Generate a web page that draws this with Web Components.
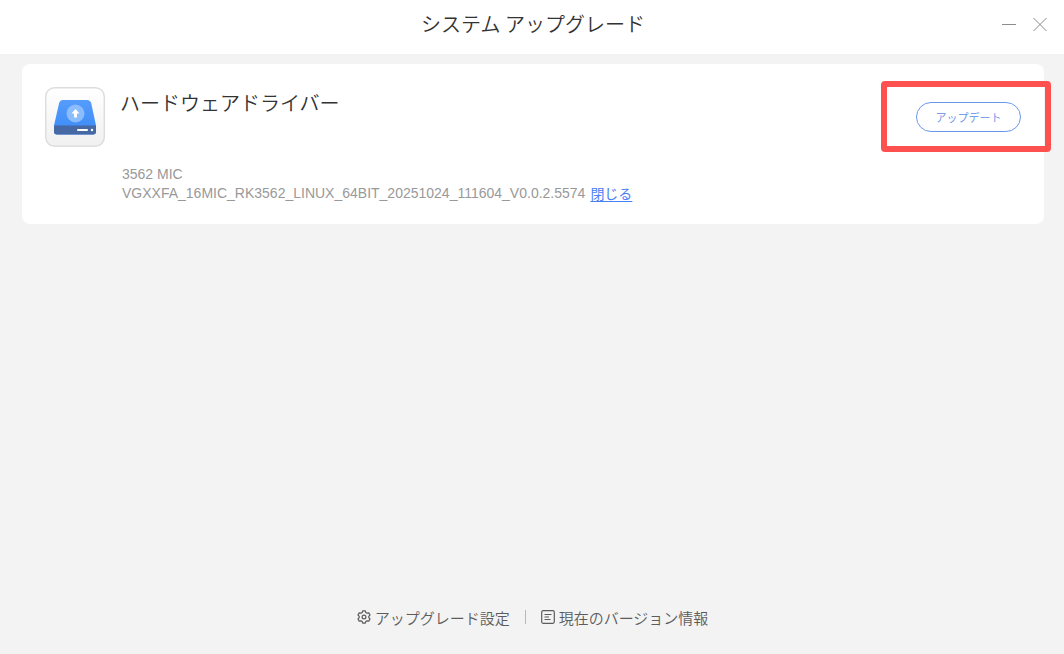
<!DOCTYPE html>
<html lang="ja">
<head>
<meta charset="utf-8">
<title>システム アップグレード</title>
<style>
html, body { height: 100%; margin: 0; }
body { background: #f3f3f3; color: #333; font-family: "Noto Sans CJK JP", sans-serif; font-weight: 350; }
</style>
</head>
<body>
<upgrade-window>
  <title-bar slot="header">システム アップグレード</title-bar>
  <upgrade-card>
    <drive-icon slot="icon"></drive-icon>
    <span slot="name">ハードウェアドライバー</span>
    <update-action slot="action">アップデート</update-action>
    <span slot="model">3562 MIC</span>
    <span slot="version">VGXXFA_16MIC_RK3562_LINUX_64BIT_20251024_111604_V0.0.2.5574</span>
  </upgrade-card>
  <footer-action slot="footer" icon="gear">アップグレード設定</footer-action>
  <footer-action slot="footer" icon="document" divided>現在のバージョン情報</footer-action>
</upgrade-window>
<script>
function define(name, html, setup) {
  const template = document.createElement('template');
  template.innerHTML = html;
  customElements.define(name, class extends HTMLElement {
    constructor() {
      super();
      this.attachShadow({ mode: 'open' }).append(template.content.cloneNode(true));
    }
    connectedCallback() { if (setup) setup(this); }
  });
}

define('upgrade-window', `
<style>
:host { display: flex; flex-direction: column; min-height: 100vh; }
main { flex: 1; padding: 10px 20px 20px 22px; }
footer { display: flex; justify-content: center; align-items: center; padding: 0 0 24px 1px; }
</style>
<slot name="header"></slot>
<main><slot></slot></main>
<footer><slot name="footer"></slot></footer>`);

define('title-bar', `
<style>
:host { display: grid; grid-template-columns: 1fr auto 1fr; align-items: center; height: 54px; box-sizing: border-box; padding: 0 16px 6px 18px; background: #fff; }
h1 { grid-column: 2; margin: 0; font-size: 20px; line-height: 28px; font-weight: inherit; }
.controls { display: flex; justify-content: flex-end; gap: 15px; }
button { border: 0; padding: 0; background: none; display: flex; }
svg { display: block; fill: none; stroke: #8c8c8c; stroke-width: 1; }
</style>
<h1><slot></slot></h1>
<div class="controls">
<button type="button" aria-label="最小化"><svg width="16" height="16"><path d="M1 8.500h14"/></svg></button>
<button type="button" aria-label="閉じる"><svg width="16" height="16"><path d="M1.500 2l13 13M14.500 2l-13 13"/></svg></button>
</div>`);

define('upgrade-card', `
<style>
:host { display: grid; grid-template-columns: 60px 1fr auto; column-gap: 15px; padding: 23px 23px 21px; border-radius: 8px; background: #fff; }
h2 { margin: 2px 0 0; font-size: 20px; line-height: 28px; font-weight: inherit; }
.details { grid-column: 2 / -1; margin: 18px 0 0; padding-left: 2px; color: #999; font-family: "Liberation Sans", sans-serif; font-size: 14px; line-height: 19px; font-weight: 400; }
.details p { margin: 0; display: flex; flex-wrap: wrap; column-gap: 5px; }
a { color: #4a80f5; font-family: "Noto Sans CJK JP", sans-serif; text-underline-offset: 2px; }
</style>
<slot name="icon"></slot>
<h2><slot name="name"></slot></h2>
<slot name="action"></slot>
<div class="details">
<p><slot name="model"></slot></p>
<p><slot name="version"></slot> <a href="#">閉じる</a></p>
</div>`);

define('drive-icon', `
<style>:host { display: block; width: 60px; height: 60px; } svg { display: block; }</style>
<svg width="60" height="60" viewBox="0 0 60 60" aria-hidden="true">
<defs>
<linearGradient id="tile" x2="0" y2="1"><stop stop-color="#fff"/><stop offset="1" stop-color="#f0f0f0"/></linearGradient>
<linearGradient id="body" x2="0" y2="1"><stop stop-color="#559cfb"/><stop offset="1" stop-color="#3a8af8"/></linearGradient>
</defs>
<rect x=".7" y=".7" width="58.600" height="58.600" rx="9" fill="url(#tile)" stroke="#ddd" stroke-width="1.400"/>
<path d="M18 13h24q3.500 0 4.300 3.500L51 38.500v6q0 3-3 3H12q-3 0-3-3v-6l5-22Q14.800 13 18 13z" fill="url(#body)"/>
<path d="M9 38.500h42v6q0 3-3 3H12q-3 0-3-3z" fill="#4669a5"/>
<circle cx="30.500" cy="26.500" r="9" fill="#8bbcfb"/>
<path d="M30.500 22l4 4.500h-2.500v4h-3v-4h-2.500z" fill="#fff"/>
<rect x="32" y="42" width="11" height="2" rx="1" fill="#fff"/>
<circle cx="47" cy="43" r="1.200" fill="#fff"/>
</svg>`);

define('update-action', `
<style>
:host { display: block; position: relative; height: 30px; margin-top: 15px; }
button { box-sizing: border-box; height: 30px; padding: 0 18px; border: 1px solid #6b97e8; border-radius: 15px; background: #fff; color: #5d8de8; font: inherit; font-size: 11px; line-height: 28px; display: block; min-width: 105px; }
.highlight { position: absolute; inset: -21px -30px -20px -35px; border: 6px solid #ff5050; border-radius: 4px; pointer-events: none; }
</style>
<button type="button"><slot></slot></button>
<span class="highlight"></span>`);

const footerIcons = {
  gear: '<path d="M5.800.8h2.400l.6 1.700 1.200.7 1.800-.3L13 5l-1.200 1.300v1.400L13 9l-1.200 2.100-1.800-.3-1.200.7-.6 1.700H5.800l-.6-1.700-1.200-.7-1.800.3L1 9l1.200-1.300V6.300L1 5l1.200-2.100 1.800.3 1.200-.7z"/><circle cx="7" cy="7" r="1.900"/>',
  document: '<rect x=".7" y=".7" width="12.600" height="12.600" rx="1.500"/><path d="M3.500 4.500h7M3.500 7h4.500M3.500 9.500h6"/>'
};
define('footer-action', `
<style>
:host { display: flex; align-items: center; }
:host([divided])::before { content: ""; height: 14px; border-left: 1px solid #b8b8b8; margin: 0 15px 2px; }
button { display: flex; align-items: center; gap: 4px; padding: 0; border: 0; background: none; color: #5c5c5c; font: inherit; font-size: 15px; line-height: 24px; }
svg { display: block; fill: none; stroke: currentColor; stroke-width: 1.200; stroke-linejoin: round; margin-bottom: 2px; }
</style>
<button type="button"><svg width="14" height="14" viewBox="0 0 14 14" aria-hidden="true"></svg><span><slot></slot></span></button>`,
  el => { el.shadowRoot.querySelector('svg').innerHTML = footerIcons[el.getAttribute('icon')]; });
</script>
</body>
</html>
